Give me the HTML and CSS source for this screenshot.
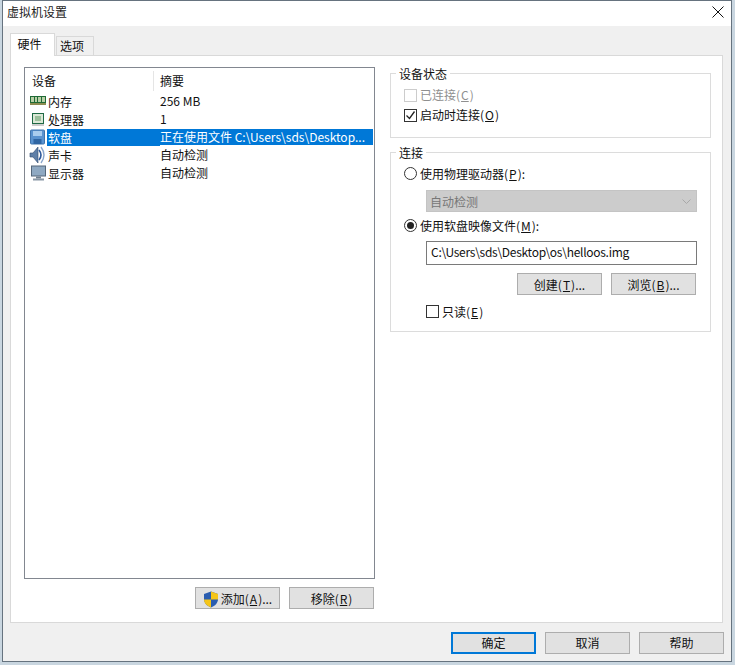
FILE: index.html
```html
<!DOCTYPE html>
<html lang="zh-CN">
<head>
<meta charset="utf-8">
<title>虚拟机设置</title>
<link rel="stylesheet" href="styles.css">
</head>
<body>
<div class="window">
  <header class="titlebar">
    <span class="title">虚拟机设置</span>
    <svg class="close" width="12" height="12" viewBox="0 0 12 12"><path d="M.5.5l11 11M11.5.5l-11 11" stroke="#111" stroke-width="1" fill="none"/></svg>
  </header>
  <div class="content">
    <div class="tabs">
      <div class="tab active">硬件</div>
      <div class="tab">选项</div>
    </div>
    <div class="panel">
      <div class="left">
        <div class="list">
          <div class="list-head">
            <div class="col-a">设备</div>
            <div class="col-b">摘要</div>
          </div>
          <div class="row">
            <svg class="ico" width="18" height="14" viewBox="0 0 18 14"><rect x="1" y="2" width="16" height="7" fill="#1f6a35"/><rect x="2" y="3" width="3" height="5" fill="#b9cfa6"/><rect x="6" y="3" width="2" height="5" fill="#b9cfa6"/><rect x="9" y="3" width="3" height="5" fill="#b9cfa6"/><rect x="13" y="3" width="3" height="5" fill="#b9cfa6"/><rect x="1" y="9" width="16" height="2" fill="#8c8c50"/></svg>
            <span class="name">内存</span><span class="sum">256 MB</span>
          </div>
          <div class="row">
            <svg class="ico" width="18" height="14" viewBox="0 0 18 14"><rect x="3.500" y="1.500" width="11" height="10" fill="#dbe8d6" stroke="#1f6a45"/><rect x="6" y="4" width="6" height="5" fill="#9cc09c"/><path d="M3 13h12" stroke="#9a9a9a"/></svg>
            <span class="name">处理器</span><span class="sum">1</span>
          </div>
          <div class="row selected">
            <svg class="ico" width="18" height="16" viewBox="0 0 18 16"><rect x="1.500" y="1" width="14" height="14" rx="1" fill="#5a93cf" stroke="#3f74ad"/><rect x="4" y="2" width="9" height="5" fill="#a9cdee"/><rect x="4.500" y="10" width="8" height="5" fill="#2f66a3"/></svg>
            <span class="name">软盘</span><span class="sum">正在使用文件 C:\Users\sds\Desktop...</span>
          </div>
          <div class="row sound">
            <svg class="ico" width="18" height="20" viewBox="0 0 18 20"><path d="M1 8h3l5-6v16l-5-6H1z" fill="#5f7fa8" stroke="#2f4a70" stroke-width=".6"/><path d="M10 5q4 5 0 10" fill="none" stroke="#2f5a9c" stroke-width="1.600"/><path d="M12 2q6 8 0 16" fill="none" stroke="#8aa6cc" stroke-width="1.400"/></svg>
            <span class="name">声卡</span><span class="sum">自动检测</span>
          </div>
          <div class="row">
            <svg class="ico" width="18" height="17" viewBox="0 0 18 17"><rect x="2.500" y="1.500" width="14" height="10" fill="#8fa9c2" stroke="#55677a"/><rect x="7" y="12" width="5" height="2" fill="#6f7f8f"/><rect x="4" y="14" width="11" height="2" fill="#8a98a6"/></svg>
            <span class="name">显示器</span><span class="sum">自动检测</span>
          </div>
        </div>
        <div class="list-actions">
          <button class="btn">
            <svg class="shield" width="16" height="17" viewBox="0 0 16 17"><path d="M8 .5l7 2.500v5c0 4-3 7-7 8.500-4-1.500-7-4.500-7-8.500V3z" fill="#2a5db0"/><path d="M8 .5l7 2.500v5.500H8zM8 8.500v8c-4-1.500-7-4.500-7-8z" fill="#f5c518"/></svg>添加(<u>A</u>)...
          </button>
          <button class="btn">移除(<u>R</u>)</button>
        </div>
      </div>
      <div class="right">
        <fieldset class="group status">
          <legend>设备状态</legend>
          <label class="check off"><span class="box"></span>已连接(<u>C</u>)</label>
          <label class="check"><span class="box">
            <svg width="11" height="11" viewBox="0 0 11 11"><path d="M1.500 5.500l3 3 5-7" fill="none" stroke="#222" stroke-width="1.300"/></svg>
          </span>启动时连接(<u>O</u>)</label>
        </fieldset>
        <fieldset class="group conn">
          <legend>连接</legend>
          <label class="check"><span class="radio"></span>使用物理驱动器(<u>P</u>):</label>
          <div class="combo"><span>自动检测</span>
            <svg width="9" height="6" viewBox="0 0 9 6"><path d="M.5.500l4 4 4-4" fill="none" stroke="#a8a8a8"/></svg>
          </div>
          <label class="check second"><span class="radio on"></span>使用软盘映像文件(<u>M</u>):</label>
          <div class="input">C:\Users\sds\Desktop\os\helloos.img</div>
          <div class="file-actions">
            <button class="btn">创建(<u>T</u>)...</button>
            <button class="btn">浏览(<u>B</u>)...</button>
          </div>
          <label class="check readonly"><span class="box"></span>只读(<u>E</u>)</label>
        </fieldset>
      </div>
    </div>
    <footer class="footer">
      <button class="btn primary">确定</button>
      <button class="btn">取消</button>
      <button class="btn">帮助</button>
    </footer>
  </div>
</div>
</body>
</html>
```
FILE: styles.css
```css
* { box-sizing: border-box; }
html, body { margin: 0; height: 100%; }
body {
  width: 735px;
  height: 665px;
  overflow: hidden;
  background: #c9d6e0;
  padding: 0 3px 3px 2px;
  font: 12px/16px "Noto Sans CJK SC", "Noto Sans", sans-serif;
  color: #111;
}
u { margin: 0 1px; }
.window {
  height: 662px;
  display: flex;
  flex-direction: column;
  background: #f0f0f0;
  border: 1px solid #66737f;
}
.titlebar {
  height: 25px;
  flex: none;
  background: #fff;
  display: flex;
  align-items: center;
  justify-content: space-between;
  padding: 0 7px 3px 4px;
}
.title { font-size: 12px; color: #222; }
.content {
  flex: 1;
  display: flex;
  flex-direction: column;
  padding: 7px 8px 0 7px;
}
.tabs { display: flex; align-items: flex-end; height: 22px; }
.tab {
  width: 38px;
  height: 19px;
  line-height: 18px;
  text-align: center;
  padding-right: 6px;
  background: #f0f0f0;
  border: 1px solid #d9d9d9;
  border-bottom: 0;
}
.tab.active {
  width: 45px;
  height: 23px;
  line-height: 20px;
  margin-right: 1px;
  background: #fff;
  position: relative;
  z-index: 1;
  margin-bottom: -1px;
}
.panel {
  height: 568px;
  flex: none;
  background: #fff;
  border: 1px solid #d9d9d9;
  display: flex;
  padding: 11px 9px 0 13px;
}
.left { width: 351px; flex: none; }
.list {
  height: 512px;
  border: 1px solid #828790;
  background: #fff;
}
.list-head { display: flex; height: 24px; align-items: center; padding-top: 2px; }
.col-a { width: 129px; padding-left: 7px; border-right: 1px solid #e5e5e5; height: 20px; line-height: 20px; }
.col-b { padding-left: 6px; }
.row {
  display: flex;
  align-items: center;
  height: 18px;
  position: relative;
}
.ico { position: absolute; left: 4px; top: 50%; transform: translateY(-50%); }
.name { margin-left: 22px; width: 113px; padding-left: 1px; line-height: 17px; }
.sum { white-space: nowrap; }
.row.selected .name, .row.selected .sum { color: #fff; }
.row.selected .name { background: #0078d7; }
.row.selected .sum { background: #0078d7; flex: 1; padding-right: 2px; }
.row.selected { margin-right: 1px; }
.list-actions {
  display: flex;
  justify-content: flex-end;
  gap: 9px;
  margin-top: 8px;
  padding-right: 1px;
}
.btn {
  width: 85px;
  height: 22px;
  padding: 0;
  font: inherit;
  line-height: 20px;
  color: #111;
  background: #e1e1e1;
  border: 1px solid #adadad;
  display: flex;
  align-items: center;
  justify-content: center;
  white-space: nowrap;
}
.list-actions .btn, .file-actions .btn { padding-top: 2px; }
.btn.primary { border: 2px solid #0078d7; }
.shield { margin-right: 2px; }
.right { width: 321px; margin-left: 15px; flex: none; }
.group {
  margin: 0;
  padding: 0;
  border: 1px solid #dcdcdc;
  min-width: 0;
  display: block;
}
.group legend {
  margin-left: -8px;
  padding: 0 3px;
  line-height: 16px;
  height: 14px;
}
.status { height: 72px; margin-top: -1px; padding: 5px 0 0 13px; }
.status .check { height: 20px; }
.conn { height: 187px; margin-top: 7px; padding: 4px 0 0 13px; }
.check { display: flex; align-items: center; height: 21px; }
.check.off { color: #8f8f8f; }
.box {
  width: 13px;
  height: 13px;
  flex: none;
  margin-right: 3px;
  background: #fff;
  border: 1px solid #333;
  display: flex;
  align-items: center;
  justify-content: center;
}
.off .box { border-color: #ccc; }
.radio {
  width: 13px;
  height: 13px;
  flex: none;
  margin-right: 3px;
  background: #fff;
  border: 1px solid #333;
  border-radius: 50%;
  position: relative;
}
.radio.on::after {
  content: "";
  position: absolute;
  left: 2px;
  top: 2px;
  width: 7px;
  height: 7px;
  border-radius: 50%;
  background: #222;
}
.combo {
  width: 271px;
  height: 22px;
  margin: 6px 0 0 22px;
  background: #cccccc;
  border: 1px solid #c4c4c4;
  display: flex;
  align-items: center;
  justify-content: space-between;
  padding: 2px 5px 0 3px;
  color: #777;
}
.second { margin-top: 3px; }
.input {
  width: 271px;
  height: 24px;
  margin: 5px 0 0 22px;
  border: 1px solid #7a7a7a;
  padding-left: 4px;
  line-height: 20px;
  letter-spacing: -0.28px;
  background: #fff;
}
.file-actions {
  width: 293px;
  display: flex;
  justify-content: flex-end;
  gap: 9px;
  margin-top: 8px;
  padding-right: 1px;
}
.readonly { margin: 6px 0 0 22px; }
.footer {
  flex: 1;
  display: flex;
  justify-content: flex-end;
  gap: 9px;
  padding-top: 9px;
  margin-right: -1px;
}
```
